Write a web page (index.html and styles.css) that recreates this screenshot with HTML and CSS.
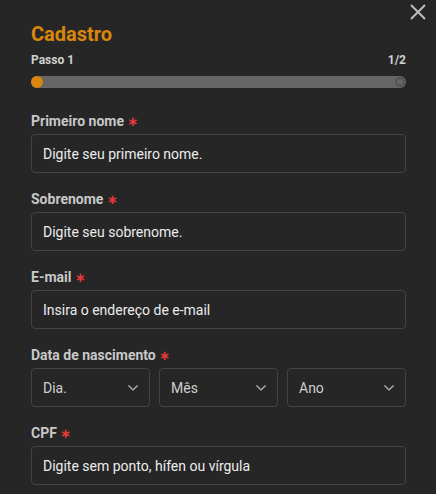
FILE: index.html
```html
<!DOCTYPE html>
<html lang="pt-BR">
<head>
    <meta charset="UTF-8">
    <meta name="viewport" content="width=device-width, initial-scale=1.0">
    <title>Cadastro</title>
    <link rel="stylesheet" href="styles.css">
</head>
<body>
    <div class="modal">
        <button class="close" aria-label="Fechar">
            <svg width="16" height="16" viewBox="0 0 16 16"><path d="M1 1L15 15M15 1L1 15" stroke="#bdbdbd" stroke-width="2" fill="none"/></svg>
        </button>
        <h1 class="title">Cadastro</h1>
        <div class="step-row">
            <span>Passo 1</span>
            <span>1/2</span>
        </div>
        <div class="progress">
            <div class="dot active"></div>
            <div class="dot end"></div>
        </div>

        <div class="field">
            <label>Primeiro nome <span class="req">∗</span></label>
            <div class="input">Digite seu primeiro nome.</div>
        </div>
        <div class="field">
            <label>Sobrenome <span class="req">∗</span></label>
            <div class="input">Digite seu sobrenome.</div>
        </div>
        <div class="field">
            <label>E-mail <span class="req">∗</span></label>
            <div class="input">Insira o endereço de e-mail</div>
        </div>
        <div class="field">
            <label>Data de nascimento <span class="req">∗</span></label>
            <div class="selects">
                <div class="input select">Dia.<svg width="10" height="6" viewBox="0 0 10 6"><path d="M0.5 0.5L5 5L9.5 0.5" stroke="#bdbdbd" stroke-width="1.2" fill="none"/></svg></div>
                <div class="input select">Mês<svg width="10" height="6" viewBox="0 0 10 6"><path d="M0.5 0.5L5 5L9.5 0.5" stroke="#bdbdbd" stroke-width="1.2" fill="none"/></svg></div>
                <div class="input select">Ano<svg width="10" height="6" viewBox="0 0 10 6"><path d="M0.5 0.5L5 5L9.5 0.5" stroke="#bdbdbd" stroke-width="1.2" fill="none"/></svg></div>
            </div>
        </div>
        <div class="field">
            <label>CPF <span class="req">∗</span></label>
            <div class="input">Digite sem ponto, hífen ou vírgula</div>
        </div>
    </div>
</body>
</html>
```

FILE: styles.css
```css
body {
    margin: 0;
    padding: 0;
    background-color: #262626;
    font-family: Roboto, "Liberation Sans", sans-serif;
    overflow: hidden;
}
.modal {
    position: relative;
    padding: 22px 30px 0 31px;
}
.close {
    position: absolute;
    top: 4px;
    right: 10px;
    background: none;
    border: none;
    padding: 0;
    cursor: pointer;
    line-height: 0;
}
.title {
    margin: 0;
    font-size: 20px;
    line-height: 24px;
    font-weight: 700;
    color: #d8870c;
}
.step-row {
    display: flex;
    justify-content: space-between;
    margin-top: 6px;
    font-size: 12px;
    line-height: 16px;
    font-weight: 700;
    color: #d0d0d0;
}
.progress {
    margin-top: 8px;
    height: 12px;
    border-radius: 6px;
    background: #666;
    display: flex;
    justify-content: space-between;
    align-items: center;
}
.dot {
    border-radius: 50%;
    box-sizing: border-box;
}
.dot.active {
    width: 12px;
    height: 12px;
    background: #d8870c;
}
.dot.end {
    width: 10px;
    height: 10px;
    margin-right: 1px;
    border: 2px solid #545454;
}
.field {
    margin-top: 25px;
}
.field + .field {
    margin-top: 18px;
}
.field label {
    display: block;
    height: 16px;
    font-size: 14px;
    line-height: 16px;
    font-weight: 700;
    color: #c8c8c8;
}
.req {
    font-family: "DejaVu Sans", sans-serif;
    font-size: 13px;
    line-height: 1;
    color: #e5393a;
}
.input {
    margin-top: 5px;
    height: 39px;
    box-sizing: border-box;
    border: 1px solid #434343;
    border-radius: 4px;
    padding: 0 11px;
    display: flex;
    align-items: center;
    font-size: 14px;
    color: #ececec;
}
.selects {
    display: grid;
    grid-template-columns: 1fr 1fr 1fr;
    gap: 9px;
    margin-top: 5px;
}
.selects .input {
    margin-top: 0;
}
.select {
    justify-content: space-between;
    color: #cfcfcf;
}
```
